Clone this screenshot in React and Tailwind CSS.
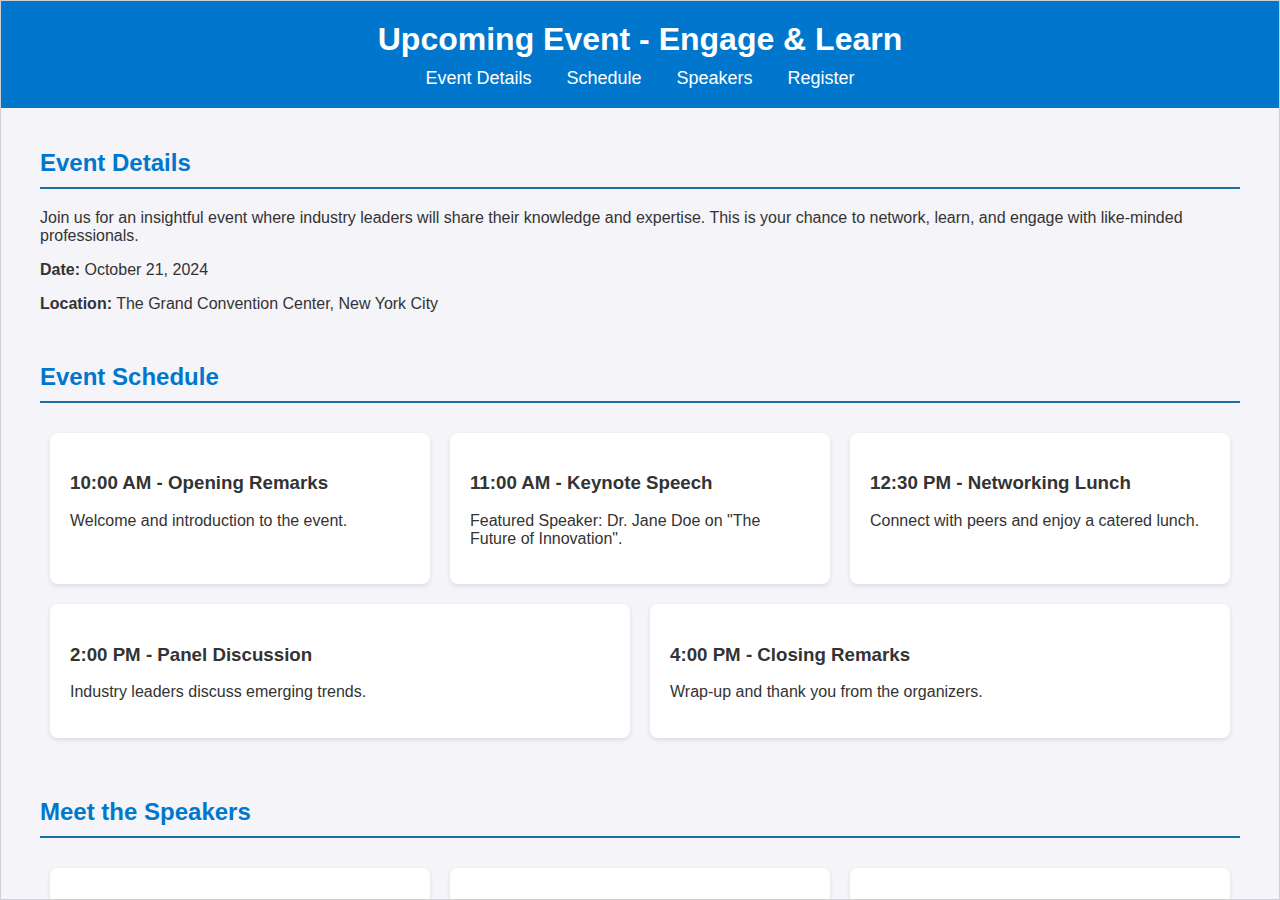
import React from "react";

const schedule = [
  { t: "10:00 AM - Opening Remarks", d: "Welcome and introduction to the event." },
  { t: "11:00 AM - Keynote Speech", d: 'Featured Speaker: Dr. Jane Doe on "The Future of Innovation".' },
  { t: "12:30 PM - Networking Lunch", d: "Connect with peers and enjoy a catered lunch." },
  { t: "2:00 PM - Panel Discussion", d: "Industry leaders discuss emerging trends." },
  { t: "4:00 PM - Closing Remarks", d: "Wrap-up and thank you from the organizers." },
];

const speakers = [
  { n: "Dr. Jane Doe", d: "Chief Innovation Officer at TechCorp." },
  { n: "John Smith", d: "Founder of StartUp Hub." },
  { n: "Emily Johnson", d: "Lead Researcher at FutureLabs." },
];

function H2({ children }) {
  return (
    <h2 className="text-[24px] leading-[28px] font-bold text-[#0077cc] pb-[10px] border-b-2 border-[#1a6fa5] mb-[20px]">
      {children}
    </h2>
  );
}

function Card({ title, desc }) {
  return (
    <div className="flex-[1_1_300px] m-[10px] bg-white rounded-[8px] shadow-[0_2px_5px_rgba(0,0,0,0.1)] p-[20px]">
      <h3 className="text-[18.72px] leading-[21.5px] font-bold mt-[19.72px] mb-[17.72px]">{title}</h3>
      <p className="text-[16px] leading-[18.4px] mb-[16px]">{desc}</p>
    </div>
  );
}

export default function App() {
  return (
    <div
      className="w-[1280px] h-[900px] overflow-hidden border border-[#cfcfd6] bg-[#f4f4f9] text-[#333]"
      style={{ fontFamily: '"Liberation Sans", Arial, sans-serif' }}
    >
      <header className="bg-[#0077cc] text-white text-center pt-[20px] pb-[19px]">
        <h1 className="text-[32px] leading-[37px] font-bold">Upcoming Event - Engage &amp; Learn</h1>
        <nav className="mt-[10px] flex justify-center gap-[35px] text-[18px] leading-[21px]">
          <a>Event Details</a>
          <a>Schedule</a>
          <a>Speakers</a>
          <a>Register</a>
        </nav>
      </header>
      <main className="px-[39px] pt-[41px]">
        <section className="mb-[49px]">
          <H2>Event Details</H2>
          <p className="text-[16px] leading-[18.4px] mb-[15px]">
            Join us for an insightful event where industry leaders will share their knowledge and expertise. This is your chance to network, learn, and engage with like-minded professionals.
          </p>
          <p className="text-[16px] leading-[18.4px] mb-[16px]">
            <strong>Date:</strong> October 21, 2024
          </p>
          <p className="text-[16px] leading-[18.4px]">
            <strong>Location:</strong> The Grand Convention Center, New York City
          </p>
        </section>
        <section className="mb-[50px]">
          <H2>Event Schedule</H2>
          <div className="flex flex-wrap -mt-[10px] pt-[10px]">
            <div className="flex flex-wrap w-full">
              {schedule.map((s) => (
                <Card key={s.t} title={s.t} desc={s.d} />
              ))}
            </div>
          </div>
        </section>
        <section>
          <H2>Meet the Speakers</H2>
          <div className="flex flex-wrap">
            {speakers.map((s) => (
              <Card key={s.n} title={s.n} desc={s.d} />
            ))}
          </div>
        </section>
      </main>
    </div>
  );
}
